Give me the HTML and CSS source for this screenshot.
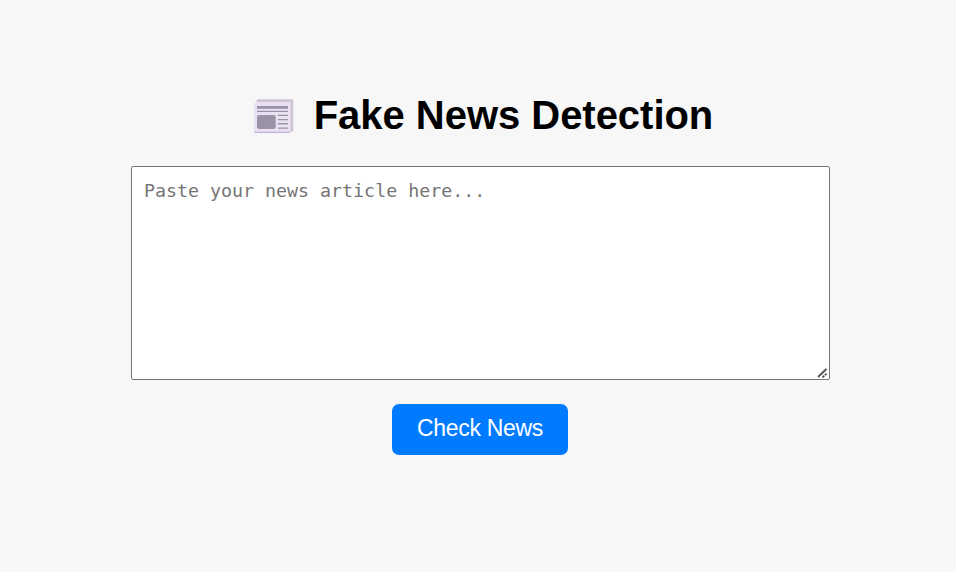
FILE: index.html
```html
<!DOCTYPE html>
<html lang="en">
<head>
<meta charset="utf-8">
<title>Fake News Detection</title>
<link rel="stylesheet" href="styles.css">
</head>
<body>
<main class="page">
<h1 class="title">
<svg class="icon" viewBox="0 0 42 36" aria-hidden="true">
<rect x="3.700" y="1.300" width="36.600" height="32.400" rx="1" fill="#cdc4d6"/>
<rect x="1" y="5" width="36" height="30" rx=".7" fill="#e9e0f2"/>
<rect x="4" y="4" width="33.500" height="30" rx=".5" fill="#e9e0f2"/>
<path d="M1.500 33.700h35.500v1.300H1.500z" fill="#c5ace0"/>
<path d="M4 8h31v2.700H4zM4 12.800h31v1.300H4zM25 16.800h10v1.300H25zM25 21h10v1.300H25zM25 25.100h10v1.300H25zM25 29.500h10v1.300H25z" fill="#9b93a5"/>
<rect x="4" y="17" width="18.700" height="14" rx="2" fill="#9b93a5"/>
</svg>
<span>Fake News Detection</span>
</h1>
<div class="field">
<textarea class="article" placeholder="Paste your news article here..."></textarea>
<svg class="grip" viewBox="0 0 11 10" aria-hidden="true"><path d="M1 9 9.500 1M5.500 9.500l1.800-1.800M8 7.200l1.500-1.500"/></svg>
</div>
<button class="check" type="button">Check News</button>
</main>
</body>
</html>
```
FILE: styles.css
```css
body {
  margin: 0;
  background: #f7f7f7;
  font-family: "Liberation Sans", Arial, sans-serif;
}
.page {
  display: flex;
  flex-direction: column;
  align-items: center;
  padding: 92px 0 0 5px;
}
.title {
  display: flex;
  align-items: center;
  gap: 19px;
  margin: 0 0 28px 5px;
  font-size: 40px;
  line-height: 46px;
  letter-spacing: -0.03px;
  white-space: nowrap;
}
.icon {
  width: 42px;
  height: 36px;
  margin-top: 2px;
}
.field {
  position: relative;
  display: flex;
  margin-bottom: 24px;
}
.article {
  box-sizing: border-box;
  width: 699px;
  height: 214px;
  margin: 0;
  padding: 12px;
  border: 1px solid #767676;
  border-radius: 2px;
  resize: none;
  font: 18.3px/24px "DejaVu Sans Mono", monospace;
}
.article::placeholder {
  color: #757575;
}
.grip {
  position: absolute;
  right: 2px;
  bottom: 2px;
  width: 11px;
  height: 10px;
  fill: none;
  stroke: #555;
  stroke-width: 1.9;
  pointer-events: none;
}
.check {
  width: 176px;
  height: 51px;
  margin-right: 2px;
  padding: 0 0 3px 1px;
  border: 0;
  border-radius: 7px;
  background: #007bff;
  color: #fff;
  font: 23px "Liberation Sans", Arial, sans-serif;
  letter-spacing: -0.3px;
}
```
